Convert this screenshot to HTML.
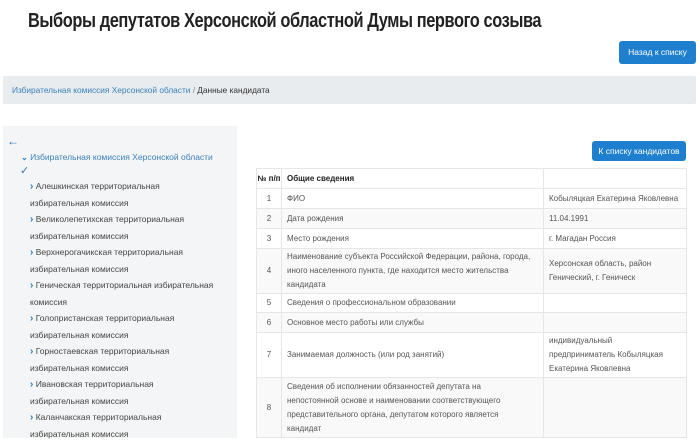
<!DOCTYPE html>
<html><head><meta charset="utf-8"><style>
*{margin:0;padding:0;box-sizing:border-box}
body{width:700px;height:438px;overflow:hidden;background:#fff;font-family:"Liberation Sans",sans-serif;color:#333;position:relative}
h1{position:absolute;left:28px;top:10px;font-size:20px;font-weight:bold;color:#222;letter-spacing:-0.5px;transform:scaleX(0.82);transform-origin:left;white-space:nowrap}
.btn{position:absolute;background:#1f7fcf;color:#fff;border-radius:3px;font-size:8.5px;text-align:center;white-space:nowrap}
.bc{position:absolute;left:3px;top:76px;width:693px;height:28px;background:#e9ecef;border-radius:2px;font-size:8.3px;line-height:28px;padding-left:9px;white-space:nowrap}
.side{position:absolute;left:3px;top:126px;width:234px;height:312px;background:#f4f5f6}
.side .t{position:absolute;font-size:8.5px;color:#444;line-height:16.5px;white-space:nowrap}
.chev{color:#2a7bc0;font-weight:bold;font-size:10px;line-height:8px;display:inline-block;vertical-align:baseline}
table{position:absolute;left:256px;top:168px;width:430px;border-collapse:collapse;font-size:8px;color:#555;table-layout:fixed}
td{border:1px solid #e6e6e6;padding:0 5px;vertical-align:middle;line-height:14px;white-space:nowrap;overflow:hidden}
td.n{text-align:center;padding:0}
tr:nth-child(odd){background:#f9f9f9}
tr.h td{color:#222;font-weight:bold;background:#fff}
</style></head><body>
<h1>Выборы депутатов Херсонской областной Думы первого созыва</h1>
<div class="btn" style="left:619px;top:41px;width:77px;height:23px;line-height:23px">Назад к списку</div>
<div class="bc"><span style="color:#3a7fb8">Избирательная комиссия Херсонской области</span> <span style="color:#888">/</span> Данные кандидата</div>
<div class="side">
<div class="t" style="left:4px;top:7px;color:#2a7bc0;font-size:12px">&#8592;</div>
<div class="t" style="left:18px;top:23px;color:#3a7fb8"><span class="chev" style="font-size:8px">&#8964;</span> Избирательная комиссия Херсонской области</div>
<div class="t" style="left:17px;top:37px;color:#2a7bc0;font-size:11px">&#10003;</div>
<div class="t" style="left:27px;top:52px"><span class="chev">&#8250;</span> Алешкинская территориальная<br>избирательная комиссия</div>
<div class="t" style="left:27px;top:85px"><span class="chev">&#8250;</span> Великолепетихская территориальная<br>избирательная комиссия</div>
<div class="t" style="left:27px;top:118px"><span class="chev">&#8250;</span> Верхнерогачикская территориальная<br>избирательная комиссия</div>
<div class="t" style="left:27px;top:151px"><span class="chev">&#8250;</span> Геническая территориальная избирательная<br>комиссия</div>
<div class="t" style="left:27px;top:184px"><span class="chev">&#8250;</span> Голопристанская территориальная<br>избирательная комиссия</div>
<div class="t" style="left:27px;top:217px"><span class="chev">&#8250;</span> Горностаевская территориальная<br>избирательная комиссия</div>
<div class="t" style="left:27px;top:250px"><span class="chev">&#8250;</span> Ивановская территориальная<br>избирательная комиссия</div>
<div class="t" style="left:27px;top:283px"><span class="chev">&#8250;</span> Каланчакская территориальная<br>избирательная комиссия</div>
</div>
<div class="btn" style="left:592px;top:141px;width:94px;height:20px;line-height:20px">К списку кандидатов</div>
<table>
<colgroup><col style="width:25px"><col style="width:262px"><col style="width:143px"></colgroup>
<tr class="h" style="height:20px"><td class="n">№ п/п</td><td>Общие сведения</td><td></td></tr>
<tr style="height:20px"><td class="n">1</td><td>ФИО</td><td>Кобыляцкая Екатерина Яковлевна</td></tr>
<tr style="height:20px"><td class="n">2</td><td>Дата рождения</td><td>11.04.1991</td></tr>
<tr style="height:20px"><td class="n">3</td><td>Место рождения</td><td>г. Магадан Россия</td></tr>
<tr style="height:45px"><td class="n">4</td><td>Наименование субъекта Российской Федерации, района, города,<br>иного населенного пункта, где находится место жительства<br>кандидата</td><td>Херсонская область, район<br>Генический, г. Геническ</td></tr>
<tr style="height:19px"><td class="n">5</td><td>Сведения о профессиональном образовании</td><td></td></tr>
<tr style="height:20px"><td class="n">6</td><td>Основное место работы или службы</td><td></td></tr>
<tr style="height:45px"><td class="n">7</td><td>Занимаемая должность (или род занятий)</td><td>индивидуальный<br>предприниматель Кобыляцкая<br>Екатерина Яковлевна</td></tr>
<tr style="height:60px"><td class="n">8</td><td>Сведения об исполнении обязанностей депутата на<br>непостоянной основе и наименовании соответствующего<br>представительного органа, депутатом которого является<br>кандидат</td><td></td></tr>
</table>
</body></html>
